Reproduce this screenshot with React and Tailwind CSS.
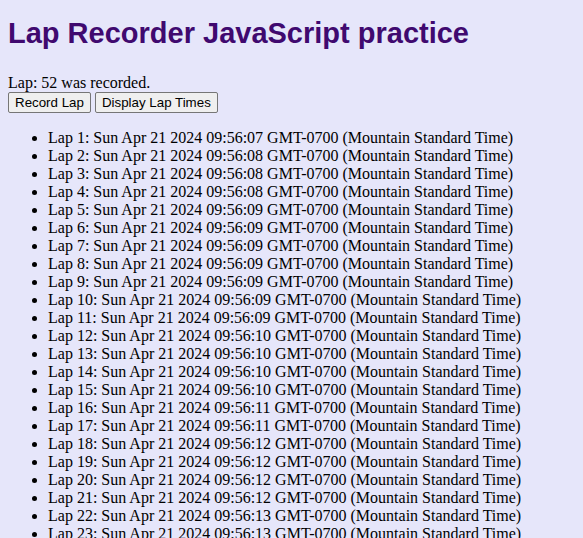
const seconds = [
  "07", "08", "08", "08", "09", "09", "09", "09", "09", "09",
  "09", "10", "10", "10", "10", "11", "11", "12", "12", "12",
  "12", "13", "13", "13", "14", "14", "14", "14", "15", "15",
  "15", "16", "16", "16", "16", "17", "17", "17", "18", "18",
  "18", "18", "19", "19", "19", "20", "20", "20", "20", "21",
  "21", "21",
]

function App() {
  return (
    <div className="min-h-screen bg-[#e6e6fa] p-2 font-['Liberation_Serif',serif] text-[16px] text-black">
      <h1 className="mt-[7px] mb-[23px] font-['Liberation_Sans',Arial,sans-serif] text-[29px] leading-[36px] font-bold text-[#40096f]">
        Lap Recorder JavaScript practice
      </h1>

      <div className="leading-[18px]">Lap: 52 was recorded.</div>

      <div className="flex gap-1 items-start">
        <button className="h-[21px] px-[6px] bg-[#efefef] border border-[#767676] rounded-[2px] font-['Liberation_Sans',Arial,sans-serif] text-[13.33px] leading-[15px] text-black">
          Record Lap
        </button>
        <button className="h-[21px] px-[6px] bg-[#efefef] border border-[#767676] rounded-[2px] font-['Liberation_Sans',Arial,sans-serif] text-[13.33px] leading-[15px] text-black">
          Display Lap Times
        </button>
      </div>

      <ul className="mt-4 pl-10 list-disc leading-[18px]">
        {seconds.map((s, i) => (
          <li key={i}>
            Lap {i + 1}: Sun Apr 21 2024 09:56:{s} GMT-0700 (Mountain Standard Time)
          </li>
        ))}
      </ul>
    </div>
  )
}

export default App
